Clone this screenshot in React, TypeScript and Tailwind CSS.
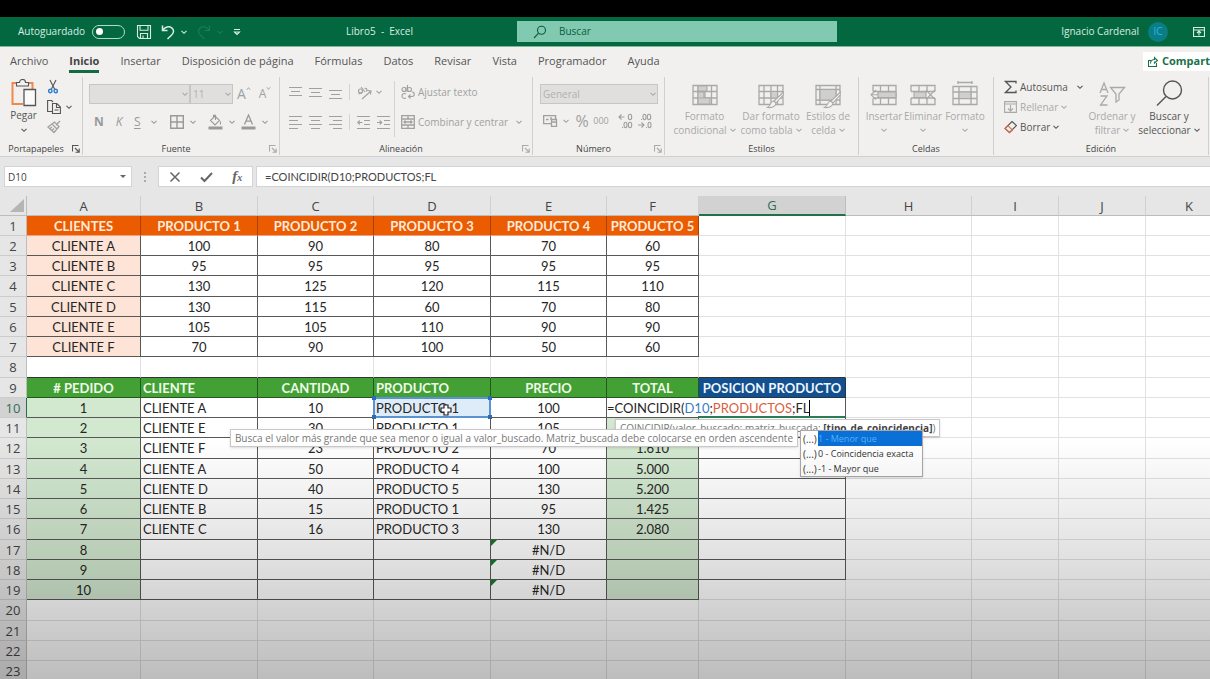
import type { ReactNode } from "react";
import { clsx } from "clsx";

interface IconProps {
    children: ReactNode;
    size?: string;
    box?: string;
}

function Icon({ children, size = "w-4 h-4", box = "0 0 16 16" }: IconProps) {
    return (
        <svg className={clsx("shrink-0", size)} viewBox={box} fill="none" stroke="currentColor" strokeWidth="1.1">
            {children}
        </svg>
    );
}

function Chevron() {
    return (
        <Icon size="w-[6px] h-[6px]" box="0 0 6 6">
            <path d="M.5 1.8 3 4.3 5.5 1.8" />
        </Icon>
    );
}

/* ---------- Title bar ---------- */

function TitleBar() {
    return (
        <header className="flex items-center h-[30px] bg-[#036840] text-[#d9ece3] text-[10px] border-b border-[#7fb79d]">
            <div className="flex items-center w-[346px] shrink-0 pl-[18px]">
                <label htmlFor="autosave" className="w-[74px] whitespace-nowrap">Autoguardado</label>
                <span className="relative w-[33px] h-[14px] flex items-center">
                    <input
                        id="autosave"
                        type="checkbox"
                        className="appearance-none w-full h-full rounded-full border border-[#b5d8c8]"
                    />
                    <span className="absolute left-[4px] w-[7px] h-[7px] rounded-full bg-white pointer-events-none" />
                </span>
                <div className="flex items-center gap-[6px] pl-[11px]">
                    <button aria-label="Guardar">
                        <Icon>
                            <path d="M1.5 1.5h13v13h-11l-2-2zM4 1.5v4.7h8V1.5M4.5 14.5V9.5h7v5M7 14v-2.5" />
                        </Icon>
                    </button>
                    <button aria-label="Deshacer" className="flex items-center gap-[6px] pl-[3px]">
                        <Icon size="w-[14px] h-4" box="0 0 14 16">
                            <path d="M1.5 1.5v5h5M1.8 6.2C4 3 8 1.8 10.7 3.8c2.6 2 2.2 5 .2 7L6.5 15" strokeWidth="1.5" />
                        </Icon>
                        <Chevron />
                    </button>
                    <button aria-label="Rehacer" disabled className="flex items-center gap-[6px] pl-1 text-[#1d7d58]">
                        <Icon size="w-[14px] h-4" box="0 0 14 16">
                            <path d="M12.5 1.5v5h-5M12.2 6.2C10 3 6 1.8 3.3 3.8c-2.6 2-2.2 5-.2 7L7.5 15" />
                        </Icon>
                        <Chevron />
                    </button>
                    <button aria-label="Personalizar" className="pl-1">
                        <Icon size="w-2 h-2" box="0 0 8 8">
                            <path d="M1 1.5h6M1.5 4 4 6.5 6.5 4z" />
                        </Icon>
                    </button>
                </div>
            </div>
            <h1 className="w-[171px] shrink-0 whitespace-pre">Libro5  -  Excel</h1>
            <div className="flex items-center w-[320px] h-[21px] px-4 gap-3 bg-[#82c9b1] text-[#0a5c3c]">
                <Icon size="w-[14px] h-[14px]" box="0 0 14 14">
                    <circle cx="8.5" cy="5.3" r="4" />
                    <path d="M5.6 8.2 1 13" />
                </Icon>
                <input
                    aria-label="Buscar"
                    placeholder="Buscar"
                    className="flex-1 min-w-0 bg-transparent outline-none placeholder:text-[#0a5c3c] placeholder:opacity-100"
                />
            </div>
            <div className="flex flex-1 items-center justify-end gap-[9px]">
                <span>Ignacio Cardenal</span>
                <span className="flex items-center justify-center w-5 h-5 rounded-full bg-[#0b7d84] text-[#29b6f0]">IC</span>
                <button aria-label="Opciones de la cinta" className="pl-4 pr-[5px]">
                    <Icon size="w-3 h-3" box="0 0 12 12">
                        <path d="M.5 1.5h11v9H.5zM.5 4h11M6 9.5V5M4 7l2-2 2 2" />
                    </Icon>
                </button>
            </div>
        </header>
    );
}

/* ---------- Tabs ---------- */

const tabs = ["Archivo", "Inicio", "Insertar", "Disposición de página", "Fórmulas", "Datos", "Revisar", "Vista", "Programador", "Ayuda"];

function Tabs() {
    return (
        <nav className="flex items-center h-7 pl-[10px] gap-[21px] text-[11px] text-[#555]">
            {tabs.map((tab) => (
                <button
                    key={tab}
                    className={clsx(
                        "h-6 pt-1 whitespace-nowrap border-b-[3px]",
                        tab === "Inicio" ? "font-bold text-[#444] border-[#126b45]" : "border-transparent"
                    )}
                >
                    {tab}
                </button>
            ))}
            <button className="flex items-center gap-1 ml-auto w-[67px] h-[19px] pl-[5px] bg-white text-[#1b6f48] font-bold whitespace-nowrap overflow-hidden">
                <Icon size="w-[10px] h-[11px]" box="0 0 10 11">
                    <path d="M3 4.5H.5v6h8V7M2.5 7.5c0-3 2-4 4-4V1.5L9.5 4.500l-3 2.500V5.500" />
                </Icon>
                Compartir
            </button>
        </nav>
    );
}

/* ---------- Ribbon ---------- */

interface GroupProps {
    label: string;
    width: string;
    launcher?: boolean;
    activeLauncher?: boolean;
    children: ReactNode;
}

function Group({ label, width, launcher, activeLauncher, children }: GroupProps) {
    return (
        <section className={clsx("flex flex-col shrink-0 border-r border-[#cfcfcf] h-[78px]", width)}>
            <div className="h-[66px]">{children}</div>
            <div className="flex items-center h-3">
                <span className="flex-1 text-center text-[9px] leading-3 text-[#444]">{label}</span>
                {launcher && (
                    <button aria-label={`Opciones de ${label}`} className={clsx("pr-[2px]", activeLauncher ? "text-[#555]" : "text-[#aaa]")}>
                        <Icon size="w-2 h-2" box="0 0 8 8">
                            <path d="M.5 6.5v-6h6M3 3l4 4M7.2 3.5v3.7H3.5" />
                        </Icon>
                    </button>
                )}
            </div>
        </section>
    );
}

function Lines({ kind }: { kind: "top" | "middle" | "bottom" | "left" | "center" | "right" }) {
    const paths = {
        top: "M0 2.5h13M2 6.5h9M0 10.5h13",
        middle: "M0 3.5h13M2 7.5h9M0 11.5h13",
        bottom: "M0 5.5h13M2 9.5h9M0 13.5h13",
        left: "M0 1.5h13M0 5.5h9M0 9.5h13M0 13.5h9",
        center: "M0 1.5h13M2 5.5h9M0 9.5h13M2 13.5h9",
        right: "M0 1.5h13M4 5.5h9M0 9.5h13M4 13.5h9"
    };
    return (
        <button aria-label={`Alinear ${kind}`} disabled>
            <Icon size="w-[13px] h-[15px]" box="0 0 13 15">
                <path d={paths[kind]} />
            </Icon>
        </button>
    );
}

function Indent({ arrow }: { arrow: string }) {
    return (
        <button aria-label="Sangría" disabled>
            <Icon size="w-[13px] h-[15px]" box="0 0 13 15">
                <path d="M0 1.5h13M7 5.5h6M7 9.5h6M0 13.5h13" />
                <path d={arrow} />
            </Icon>
        </button>
    );
}

function Rule() {
    return <span className="w-px h-4 bg-[#d4d4d4]" />;
}

function Clipboard() {
    return (
        <Group label="Portapapeles" width="w-[83px]" launcher activeLauncher>
            <div className="flex h-full text-[#555]">
                <button className="flex flex-col items-center w-[47px] pt-[2px] text-[10px]">
                    <Icon size="w-[26px] h-7" box="0 0 26 28">
                        <path d="M5 4H1.5v21H12M18 4h3.5v6" stroke="#f08a4b" strokeWidth="2" />
                        <path d="M5.5 7V3.5h3a3 3 0 0 1 6 0h3V7z" fill="#f3f2f1" />
                        <path d="M13 10.5h11.5v16H13z" fill="#fafafa" strokeWidth="1.3" />
                    </Icon>
                    <span className="leading-4">Pegar</span>
                    <span className="pt-1"><Chevron /></span>
                </button>
                <div className="flex flex-col items-start gap-1 pt-[2px]">
                    <button aria-label="Cortar" className="px-px">
                        <Icon size="w-[10px] h-4" box="0 0 10 16">
                            <path d="M2 1l4.8 9.5M8 1 3.2 10.5" />
                            <circle cx="2.3" cy="12" r="1.7" stroke="#2b7cd3" strokeWidth="1.4" />
                            <circle cx="7.7" cy="12" r="1.7" stroke="#2b7cd3" strokeWidth="1.4" />
                        </Icon>
                    </button>
                    <button aria-label="Copiar" className="flex items-center gap-[5px]">
                        <Icon size="w-[14px] h-4" box="0 0 14 16">
                            <path d="M5 12.5H.6v-11h4L6 3" />
                            <path d="M5.5 4.5h4.3l3.6 3.6v6.4H5.5zM9.5 4.5v4h4M7.5 11h4" />
                        </Icon>
                        <Chevron />
                    </button>
                    <button aria-label="Copiar formato" className="text-[#a0a0a0]">
                        <Icon size="w-[14px] h-4" box="0 0 14 16">
                            <path d="M13 2 9 6M5 5l5 5 2-2.5L7.5 3zM5 5 1 8l6 5.5L10 10M3 9.5l2-1.5M5 11.5l2-2" strokeWidth="1.3" />
                        </Icon>
                    </button>
                </div>
            </div>
        </Group>
    );
}

function FontGroup() {
    return (
        <Group label="Fuente" width="w-[197px]" launcher>
            <div className="pt-[7px] text-[#a0a0a0]">
                <div className="flex items-center h-5 pl-[6px]">
                    <Dropdown label="Fuente" width="w-[101px]" value="" />
                    <Dropdown label="Tamaño de fuente" width="w-[43px]" value="11" />
                    <button aria-label="Aumentar tamaño" disabled className="flex items-start pl-1 text-sm leading-4">
                        A
                        <Icon size="w-[5px] h-[5px]" box="0 0 6 6"><path d="M1 4.5 3 2l2 2.5" /></Icon>
                    </button>
                    <button aria-label="Reducir tamaño" disabled className="flex items-start pl-2 text-xs leading-4">
                        A
                        <Icon size="w-[5px] h-[5px]" box="0 0 6 6"><path d="M1 1.5 3 4l2-2.5" /></Icon>
                    </button>
                </div>
                <div className="flex items-center h-5 mt-2 pl-[11px] text-[#999] text-xs">
                    <button disabled className="w-[10px] font-bold">N</button>
                    <button disabled className="w-[10px] ml-[10px] italic">K</button>
                    <button disabled className="flex items-center gap-[10px] ml-[10px]">
                        <span className="underline underline-offset-2">S</span>
                        <Chevron />
                    </button>
                    <span className="ml-2"><Rule /></span>
                    <button aria-label="Bordes" disabled className="flex items-center gap-[6px] ml-[5px]">
                        <Icon size="w-[14px] h-[14px]" box="0 0 14 14">
                            <path d="M.7.7h12.6v12.6H.7zM7 .7v12.6M.7 7h12.6" strokeWidth="1.4" />
                        </Icon>
                        <Chevron />
                    </button>
                    <span className="ml-[7px]"><Rule /></span>
                    <button aria-label="Color de relleno" disabled className="flex items-center gap-[6px] ml-[5px]">
                        <Icon size="w-[15px] h-4" box="0 0 15 16">
                            <path d="M7 2 2.5 6.5 7 11l4.5-4.5zM5.5 3.5V1.2h2V6M12.5 7.5v3" />
                            <path d="M.5 14h14" strokeWidth="3" />
                        </Icon>
                        <Chevron />
                    </button>
                    <button aria-label="Color de fuente" disabled className="flex items-center gap-[6px] ml-[6px]">
                        <Icon size="w-[15px] h-4" box="0 0 15 16">
                            <path d="M3.5 10.5 7.5 1l4 9.5M5 7.2h5" strokeWidth="1.3" />
                            <path d="M.5 14h14" strokeWidth="3" />
                        </Icon>
                        <Chevron />
                    </button>
                </div>
            </div>
        </Group>
    );
}

function Dropdown({ label, width, value }: { label: string; width: string; value: string }) {
    return (
        <span className={clsx("relative flex items-center shrink-0 h-5", width)}>
            <select
                aria-label={label}
                disabled
                className="appearance-none w-full h-full pl-[2px] border border-[#c6c6c6] bg-[#e1dfdd] text-[10px] leading-4 text-[#b0b0b0] opacity-100"
            >
                <option>{value}</option>
            </select>
            <span className="absolute right-[2px] text-[#a8a8a8] pointer-events-none"><Chevron /></span>
        </span>
    );
}

function Alignment() {
    return (
        <Group label="Alineación" width="w-[253px]" launcher>
            <div className="flex h-full text-[#a0a0a0] text-[10px]">
                <div className="w-[115px] mt-1 mb-[6px] pl-[9px] border-r border-[#d4d4d4]">
                    <div className="flex items-center gap-[7px] h-[22px]">
                        <Lines kind="top" />
                        <Lines kind="middle" />
                        <Lines kind="bottom" />
                        <Rule />
                        <button aria-label="Orientación" disabled className="flex items-center gap-1">
                            <Icon size="w-[15px] h-[15px]" box="0 0 15 15">
                                <circle cx="3.5" cy="6" r="2" />
                                <path d="M5.5 7.5 1.5 9M4 2l4 5M7.5 3.5c2-1 3.5 1.5 1.5 3M5 14l9-8M10.5 5.5 14 6l-.5 3.5" />
                            </Icon>
                            <Chevron />
                        </button>
                    </div>
                    <div className="flex items-center gap-[7px] h-[22px] mt-2">
                        <Lines kind="left" />
                        <Lines kind="center" />
                        <Lines kind="right" />
                        <Rule />
                        <Indent arrow="M5.5 7.5H.8M2.8 5.5l-2 2 2 2" />
                        <Indent arrow="M0 7.5h4.7M2.7 5.5l2 2-2 2" />
                    </div>
                </div>
                <div className="flex-1 pt-1 pl-[6px]">
                    <button disabled className="flex items-center gap-[3px] h-[22px] whitespace-nowrap">
                        <Icon size="w-[14px] h-[15px]" box="0 0 14 15">
                            <circle cx="3" cy="4.5" r="2" />
                            <circle cx="8.5" cy="4.5" r="2" />
                            <path d="M5 2.3v4.6M6.5 0v6.5M5 9c-2-1.2-4 0-4 2s2 3 4 2M11 7c3 0 3 4.5 0 4.5H7.5M9.5 9.5l-2 2 2 2" />
                        </Icon>
                        Ajustar texto
                    </button>
                    <button disabled className="flex items-center gap-[3px] h-[22px] mt-2 whitespace-nowrap">
                        <Icon size="w-[14px] h-[14px]" box="0 0 14 14">
                            <path d="M.7.7h12.6v12.6H.7zM.7 4h12.6M.7 10h12.6M7 .7V4M7 10v3.3M3 7h8M4.5 5.5 3 7l1.5 1.5M9.5 5.5 11 7 9.5 8.5" strokeWidth="1.3" />
                        </Icon>
                        Combinar y centrar
                        <span className="pl-[5px]"><Chevron /></span>
                    </button>
                </div>
            </div>
        </Group>
    );
}

function NumberGroup() {
    return (
        <Group label="Número" width="w-[132px]" launcher>
            <div className="pt-[7px] pl-[7px] text-[#a0a0a0]">
                <Dropdown label="Formato de número" width="w-[118px]" value="General" />
                <div className="flex items-center h-[22px] mt-[6px] pl-[3px]">
                    <button aria-label="Contabilidad" disabled className="flex items-center gap-[5px]">
                        <Icon size="w-[15px] h-3" box="0 0 15 12">
                            <path d="M.6.6h12v8H.6zM3 4.5h2.5M8 2v3" strokeWidth="1.4" />
                            <path d="M8.5 4.5h5v7h-5zM8.5 7h5" fill="#f3f2f1" strokeWidth="1.3" />
                        </Icon>
                        <Chevron />
                    </button>
                    <button disabled className="w-[18px] ml-1 text-base leading-5">%</button>
                    <button disabled className="w-[18px] ml-px text-[9px] leading-5">000</button>
                    <span className="ml-1"><Rule /></span>
                    <button aria-label="Aumentar decimales" disabled className="ml-1">
                        <Icon size="w-[15px] h-4" box="0 0 15 16">
                            <path d="M6.5 4H1M3.5 1.5 1 4l2.5 2.5M4 14.5h1" />
                            <ellipse cx="12" cy="4" rx="1.7" ry="2.7" />
                            <ellipse cx="7.5" cy="12" rx="1.5" ry="2.7" />
                            <ellipse cx="12" cy="12" rx="1.7" ry="2.7" />
                        </Icon>
                    </button>
                    <button aria-label="Disminuir decimales" disabled className="ml-1">
                        <Icon size="w-[15px] h-4" box="0 0 15 16">
                            <path d="M1 12h6M4.5 9.5 7 12l-2.5 2.5M4 6.5h1M9 14.5h1" />
                            <ellipse cx="12.5" cy="12" rx="1.5" ry="2.7" />
                            <ellipse cx="7.5" cy="4" rx="1.5" ry="2.7" />
                            <ellipse cx="12" cy="4" rx="1.7" ry="2.7" />
                        </Icon>
                    </button>
                </div>
            </div>
        </Group>
    );
}

interface BigButtonProps {
    width: string;
    first: string;
    second?: string;
    enabled?: boolean;
    children: ReactNode;
}

function BigButton({ width, first, second, enabled, children }: BigButtonProps) {
    return (
        <button
            disabled={!enabled}
            className={clsx("flex flex-col items-center shrink-0 text-[10px] whitespace-nowrap", width, enabled ? "text-[#555]" : "text-[#a9a9a9]")}
        >
            {children}
            <span className="leading-[14px]">{first}</span>
            <span className="flex items-center gap-[3px] h-[14px] leading-[14px]">
                {second}
                <Chevron />
            </span>
        </button>
    );
}

const sheetGrid = "M1 4.5h24v19H1zM1 10.5h24M1 17h24M6 4.5v19M13 4.5v19M19.5 4.5v19";

function Styles() {
    return (
        <Group label="Estilos" width="w-[194px]">
            <div className="flex justify-center h-full pt-1">
                <BigButton width="w-[68px]" first="Formato" second="condicional">
                    <Icon size="w-[26px] h-7" box="0 0 26 28">
                        <path d={sheetGrid} strokeWidth="1.3" />
                        <path d="M6 5h9v5H6zM6 11h6v6H6zM6 17h12v6H6z" fill="#cfcfcf" />
                    </Icon>
                </BigButton>
                <BigButton width="w-[65px]" first="Dar formato" second="como tabla">
                    <Icon size="w-[26px] h-7" box="0 0 26 28">
                        <path d={sheetGrid} strokeWidth="1.3" />
                        <path d="M13 10.5h6.5V17H13z" fill="#cfcfcf" />
                        <path d="M25.5 11 16 20l2 2 8-9zM15.5 20c-3 0-2 4-6 6.5 5 .5 8-1 8.5-4.5z" fill="#f3f2f1" />
                    </Icon>
                </BigButton>
                <BigButton width="w-[49px]" first="Estilos de" second="celda">
                    <Icon size="w-[26px] h-7" box="0 0 26 28">
                        <path d="M1 4.5h24v19H1zM1 8.5h24M1 19h24M5 4.5v19M21 4.5v19" strokeWidth="1.3" />
                        <path d="M5 8.5h16V19H5z" fill="#cfcfcf" />
                        <path d="M25.5 11 16 20l2 2 8-9zM15.5 20c-3 0-2 4-6 6.5 5 .5 8-1 8.5-4.5z" fill="#f3f2f1" />
                    </Icon>
                </BigButton>
            </div>
        </Group>
    );
}

function Cells() {
    return (
        <Group label="Celdas" width="w-[135px]">
            <div className="flex justify-center h-full pt-1">
                <BigButton width="w-[39px]" first="Insertar">
                    <Icon size="w-[28px] h-7" box="0 0 28 28">
                        <path d="M3 10.5v-6h23v19H3v-6M3 10.5h23V17H3M10.5 4.5v6M18.5 4.5v6M10.5 17v6.5M18.5 17v6.5" strokeWidth="1.3" />
                        <path d="M8 11h18v5.5H8z" fill="#cfcfcf" />
                        <path d="M8 13.8H1M6 9l-5 4.8 5 4.7" />
                    </Icon>
                </BigButton>
                <BigButton width="w-[39px]" first="Eliminar">
                    <Icon size="w-[28px] h-7" box="0 0 28 28">
                        <path d="M2 10.5v-6h24v6M2 17v6.5h24V17M2 10.5h24M2 17h24M10 4.5v6M18 4.5v6M10 17v6.5M18 17v6.5" strokeWidth="1.3" />
                        <path d="M5 11h12v5.5H5z" fill="#cfcfcf" />
                        <path d="m17 9 9 9.5M26 9l-9 9.5" />
                    </Icon>
                </BigButton>
                <BigButton width="w-[45px]" first="Formato">
                    <Icon size="w-[26px] h-7" box="0 0 26 28">
                        <path d="M1 5.5h24v18H1zM1 11h24M1 17.5h24M7 5.5v18M19 5.5v18M6 1.5h14M6 0v3M20 0v3" strokeWidth="1.3" />
                        <path d="M7 11h12v6.5H7z" fill="#cfcfcf" />
                    </Icon>
                </BigButton>
            </div>
        </Group>
    );
}

function Editing() {
    return (
        <Group label="Edición" width="w-[215px]">
            <div className="flex h-full pl-[10px] text-[10px] text-[#555]">
                <div className="w-[82px]">
                    <button className="flex items-center gap-[3px] h-5">
                        <Icon size="w-[13px] h-[14px]" box="0 0 13 14">
                            <path d="M12 3.5V1.5H1.5L7 7l-5.5 5.5H12v-2" strokeWidth="1.3" />
                        </Icon>
                        Autosuma
                        <span className="pl-[6px]"><Chevron /></span>
                    </button>
                    <button disabled className="flex items-center gap-[3px] h-5 text-[#a9a9a9]">
                        <Icon size="w-[13px] h-[14px]" box="0 0 13 14">
                            <path d="M.6 1.6h11.8v10.8H.6zM.6 4h11.8M6.5 5v6M4 8.5 6.5 11 9 8.5" />
                        </Icon>
                        Rellenar
                        <Chevron />
                    </button>
                    <button className="flex items-center gap-[3px] h-5">
                        <Icon size="w-[13px] h-[14px]" box="0 0 13 14">
                            <path d="m8 1.5 4.5 4-7 7L1 8.5z" />
                            <path d="M3.8 5.7 8.5 10l-3 2.7L1 8.5z" stroke="#dd6b50" />
                        </Icon>
                        Borrar
                        <Chevron />
                    </button>
                </div>
                <BigButton width="w-[52px]" first="Ordenar y" second="filtrar">
                    <Icon size="w-[28px] h-8" box="0 0 28 32">
                        <path d="m2 16 4-10 4 10M3.5 12.5h5M2.5 19H9L2.5 28H9.5M12.5 10.5h14L21 17v6l-3 2v-8z" strokeWidth="1.3" />
                    </Icon>
                </BigButton>
                <BigButton width="w-[62px]" first="Buscar y" second="seleccionar" enabled>
                    <Icon size="w-[28px] h-8" box="0 0 28 32">
                        <circle cx="17.5" cy="13" r="9" strokeWidth="1.4" />
                        <path d="M11 19.5 2 28.5" strokeWidth="1.4" />
                    </Icon>
                </BigButton>
            </div>
        </Group>
    );
}

/* ---------- Formula bar ---------- */

function FormulaBar() {
    return (
        <div className="flex items-center h-10 shrink-0 pl-1 bg-[#e6e6e6] text-[11px] text-[#444] border-t border-[#d0d0d0]">
            <div className="relative flex items-center w-[128px] h-[21px]">
                <input aria-label="Cuadro de nombres" defaultValue="D10" className="w-full h-full pl-[3px] bg-white border border-[#d4d4d4] text-[10px]" />
                <span className="absolute right-[6px] w-0 h-0 border-x-[3px] border-x-transparent border-t-[3px] border-t-[#666]" />
            </div>
            <div className="flex flex-col items-center gap-[2px] w-[26px]">
                <span className="w-[2px] h-[2px] bg-[#aaa]" />
                <span className="w-[2px] h-[2px] bg-[#aaa]" />
                <span className="w-[2px] h-[2px] bg-[#aaa]" />
            </div>
            <div className="flex items-center justify-around w-[95px] h-[21px] bg-white border border-[#d4d4d4] text-[#666]">
                <button aria-label="Cancelar">
                    <Icon size="w-3 h-3" box="0 0 12 12">
                        <path d="m1.5 1.5 9 9M10.5 1.5l-9 9" strokeWidth="1.5" />
                    </Icon>
                </button>
                <button aria-label="Introducir">
                    <Icon size="w-[13px] h-3" box="0 0 13 12">
                        <path d="m1 6.5 3.5 3.5L12 2" strokeWidth="2" />
                    </Icon>
                </button>
                <button className="font-['Liberation_Serif',serif] italic font-bold text-[15px] leading-4">
                    f<span className="text-[10px]">x</span>
                </button>
            </div>
            <input
                aria-label="Barra de fórmulas"
                defaultValue="=COINCIDIR(D10;PRODUCTOS;FL"
                className="flex-1 min-w-0 h-[21px] ml-[3px] pl-2 bg-white border border-r-0 border-[#d4d4d4] font-[Lato,sans-serif]"
            />
        </div>
    );
}

/* ---------- Sheet ---------- */

const columns = [
    { name: "A", width: "w-[114px]" },
    { name: "B", width: "w-[117px]" },
    { name: "C", width: "w-[116px]" },
    { name: "D", width: "w-[117px]" },
    { name: "E", width: "w-[116px]" },
    { name: "F", width: "w-[92px]" },
    { name: "G", width: "w-[147px]" },
    { name: "H", width: "w-[126px]" },
    { name: "I", width: "w-[87px]" },
    { name: "J", width: "w-[87px]" },
    { name: "K", width: "w-[87px]" }
];

const rows: string[][] = [
    ["CLIENTES", "PRODUCTO 1", "PRODUCTO 2", "PRODUCTO 3", "PRODUCTO 4", "PRODUCTO 5"],
    ["CLIENTE A", "100", "90", "80", "70", "60"],
    ["CLIENTE B", "95", "95", "95", "95", "95"],
    ["CLIENTE C", "130", "125", "120", "115", "110"],
    ["CLIENTE D", "130", "115", "60", "70", "80"],
    ["CLIENTE E", "105", "105", "110", "90", "90"],
    ["CLIENTE F", "70", "90", "100", "50", "60"],
    [],
    ["# PEDIDO", "CLIENTE", "CANTIDAD", "PRODUCTO", "PRECIO", "TOTAL", "POSICION PRODUCTO"],
    ["1", "CLIENTE A", "10", "PRODUCTO 1", "100"],
    ["2", "CLIENTE E", "30", "PRODUCTO 1", "105", ""],
    ["3", "CLIENTE F", "23", "PRODUCTO 2", "70", "1.610"],
    ["4", "CLIENTE A", "50", "PRODUCTO 4", "100", "5.000"],
    ["5", "CLIENTE D", "40", "PRODUCTO 5", "130", "5.200"],
    ["6", "CLIENTE B", "15", "PRODUCTO 1", "95", "1.425"],
    ["7", "CLIENTE C", "16", "PRODUCTO 3", "130", "2.080"],
    ["8", "", "", "", "#N/D"],
    ["9", "", "", "", "#N/D"],
    ["10", "", "", "", "#N/D"],
    [],
    [],
    [],
    []
];

function cellStyle(row: number, col: number) {
    if (row === 1 && col < 6) return "bg-[#eb5c00] text-[#ffeadd] font-bold border-r-[#a34308] border-b-[#f0a080]";
    if (row > 1 && row < 8 && col < 6) return clsx("border-[#585858]", col === 0 ? "bg-[#fde4d6]" : "bg-white");
    if (row === 8) return clsx("border-r-[#e1e1e1]", col < 7 ? "border-b-[#333]" : "border-b-[#e1e1e1]");
    if (row === 9 && col < 6) return "bg-[#43a035] text-[#f0fbe9] font-bold border-[#24581f]";
    if (row === 9 && col === 6) return "bg-[#12508f] text-[#eef5fc] font-bold border-[#1f3550]";
    if (row > 9 && row < 20 && col < 6) return clsx("border-[#585858]", (col === 0 || col === 5) && "bg-[#d2e8cf]");
    if (row > 9 && row < 19 && col === 6) return "border-[#585858]";
    return "border-[#e1e1e1]";
}

const hints = ["1 - Menor que", "0 - Coincidencia exacta", "-1 - Mayor que"];

function FormulaCell() {
    return (
        <td colSpan={2} className="relative p-0 bg-white border-r border-b border-r-[#585858] border-b-[#585858] text-left">
            <div className="flex items-center whitespace-nowrap">
                =COINCIDIR(<span className="text-[#3a7cc4]">D10</span>;<span className="text-[#d9603c]">PRODUCTOS</span>;FL
                <span className="w-px h-4 bg-black" />
            </div>
            <span className="absolute right-0 -bottom-px w-[147px] h-[2px] bg-[#2c7d57]" />
            <div className="absolute z-10 left-[8px] top-[21px] h-[18px] px-1 flex items-center bg-white border border-[#c8c8c8] shadow-sm font-['Open_Sans',sans-serif] text-[10px] text-[#777] whitespace-pre">
                COINCIDIR(valor_buscado; matriz_buscada; <b className="text-[#444]">[tipo_de_coincidencia]</b>)
            </div>
            <div className="absolute z-20 right-[47px] top-[31px] h-[18px] px-1 flex items-center bg-white border border-[#c8c8c8] shadow-sm font-['Open_Sans',sans-serif] text-[10px] text-[#777] whitespace-nowrap">
                Busca el valor más grande que sea menor o igual a valor_buscado. Matriz_buscada debe colocarse en orden ascendente
            </div>
            <ul className="absolute z-30 left-[193px] top-[32px] w-[123px] pl-[2px] bg-white border border-[#a8a8a8] shadow font-['Open_Sans',sans-serif] text-[9px] text-[#333] whitespace-nowrap">
                {hints.map((hint, i) => (
                    <li key={hint} className="flex items-center h-[15px]">
                        <span className="w-[15px] text-[10px]">(...)</span>
                        <span className={clsx("flex-1 leading-[15px]", i === 0 && "bg-[#0a6fd6] text-[#4fb4f5]")}>{hint}</span>
                    </li>
                ))}
            </ul>
        </td>
    );
}

function Cell({ row, col, text }: { row: number; col: number; text: string }) {
    const leftAligned = row > 8 && (col === 1 || col === 3);
    const isReference = row === 10 && col === 3;

    return (
        <td className={clsx("relative p-0 border-r border-b whitespace-nowrap", leftAligned ? "text-left pl-[2px]" : "text-center", cellStyle(row, col))}>
            {isReference && (
                <span className="absolute -inset-px bg-[#deebf8] border-2 border-[#5b92d2]">
                    <span className="absolute -left-[3px] -top-[3px] w-1 h-1 bg-[#2b6cb8]" />
                    <span className="absolute -right-[3px] -top-[3px] w-1 h-1 bg-[#2b6cb8]" />
                    <span className="absolute -left-[3px] -bottom-[3px] w-1 h-1 bg-[#2b6cb8]" />
                    <span className="absolute -right-[3px] -bottom-[3px] w-1 h-1 bg-[#2b6cb8]" />
                </span>
            )}
            {text === "#N/D" && (
                <span className="absolute left-0 top-0 w-0 h-0 border-t-[6px] border-t-[#107c2c] border-r-[6px] border-r-transparent" />
            )}
            <span className="relative">{text}</span>
            {isReference && (
                <svg className="absolute left-[66px] top-[6px] w-3 h-3" viewBox="0 0 12 12" fill="#fff" stroke="#222" strokeWidth="1.2">
                    <path d="M4 1h4v3h3v4H8v3H4V8H1V4h3z" />
                </svg>
            )}
        </td>
    );
}

function Sheet() {
    return (
        <main className="relative flex-1 overflow-hidden bg-white">
            <table className="table-fixed w-full min-w-[1233px] border-separate border-spacing-0 font-[Lato,sans-serif] text-[13px] leading-[18px] text-[#262626]">
                <colgroup>
                    <col className="w-[27px]" />
                    {columns.map((column) => (
                        <col key={column.name} className={column.width} />
                    ))}
                </colgroup>
                <thead>
                    <tr className="h-5 bg-[#e6e6e6] font-['Open_Sans',sans-serif] text-[#444]">
                        <th className="p-0 border-r border-b border-[#bdbdbd]">
                            <span className="block ml-auto mr-[2px] w-0 h-0 border-b-[13px] border-b-[#b5b5b5] border-l-[14px] border-l-transparent" />
                        </th>
                        {columns.map(({ name }) => (
                            <th
                                key={name}
                                className={clsx(
                                    "p-0 font-normal border-r",
                                    name === "G" ? "bg-[#d2d2d2] text-[#2f6f50] border-b-2 border-r-[#bdbdbd] border-b-[#217346]" : "border-b border-r-[#d0d0d0] border-b-[#bdbdbd]"
                                )}
                            >
                                {name}
                            </th>
                        ))}
                    </tr>
                </thead>
                <tbody>
                    {rows.map((values, i) => {
                        const row = i + 1;
                        return (
                            <tr key={row} className="h-5 nth-[4n]:h-[21px]">
                                <th
                                    className={clsx(
                                        "p-0 font-normal border-r border-b border-b-[#cccccc] font-['Open_Sans',sans-serif]",
                                        row === 10 ? "bg-[#d2d2d2] text-[#2f6f50] border-r-[#217346]" : "bg-[#e6e6e6] text-[#444] border-r-[#bdbdbd]"
                                    )}
                                >
                                    {row}
                                </th>
                                {columns.map(({ name }, col) => {
                                    if (row === 10 && col === 5) return <FormulaCell key={name} />;
                                    if (row === 10 && col === 6) return null;
                                    return <Cell key={name} row={row} col={col} text={values[col] ?? ""} />;
                                })}
                            </tr>
                        );
                    })}
                </tbody>
            </table>
            <div className="absolute inset-x-0 bottom-0 h-60 z-40 pointer-events-none bg-linear-to-b from-black/0 via-black/12 to-black/26" />
        </main>
    );
}

export default function App() {
    return (
        <div className="flex flex-col h-screen overflow-hidden bg-[#f1f0ef] font-['Open_Sans','Noto_Sans',sans-serif]">
            <div className="h-[17px] shrink-0 bg-black" />
            <TitleBar />
            <Tabs />
            <div className="flex h-[81px] shrink-0 pt-[2px] overflow-hidden">
                <Clipboard />
                <FontGroup />
                <Alignment />
                <NumberGroup />
                <Styles />
                <Cells />
                <Editing />
            </div>
            <FormulaBar />
            <Sheet />
        </div>
    );
}
